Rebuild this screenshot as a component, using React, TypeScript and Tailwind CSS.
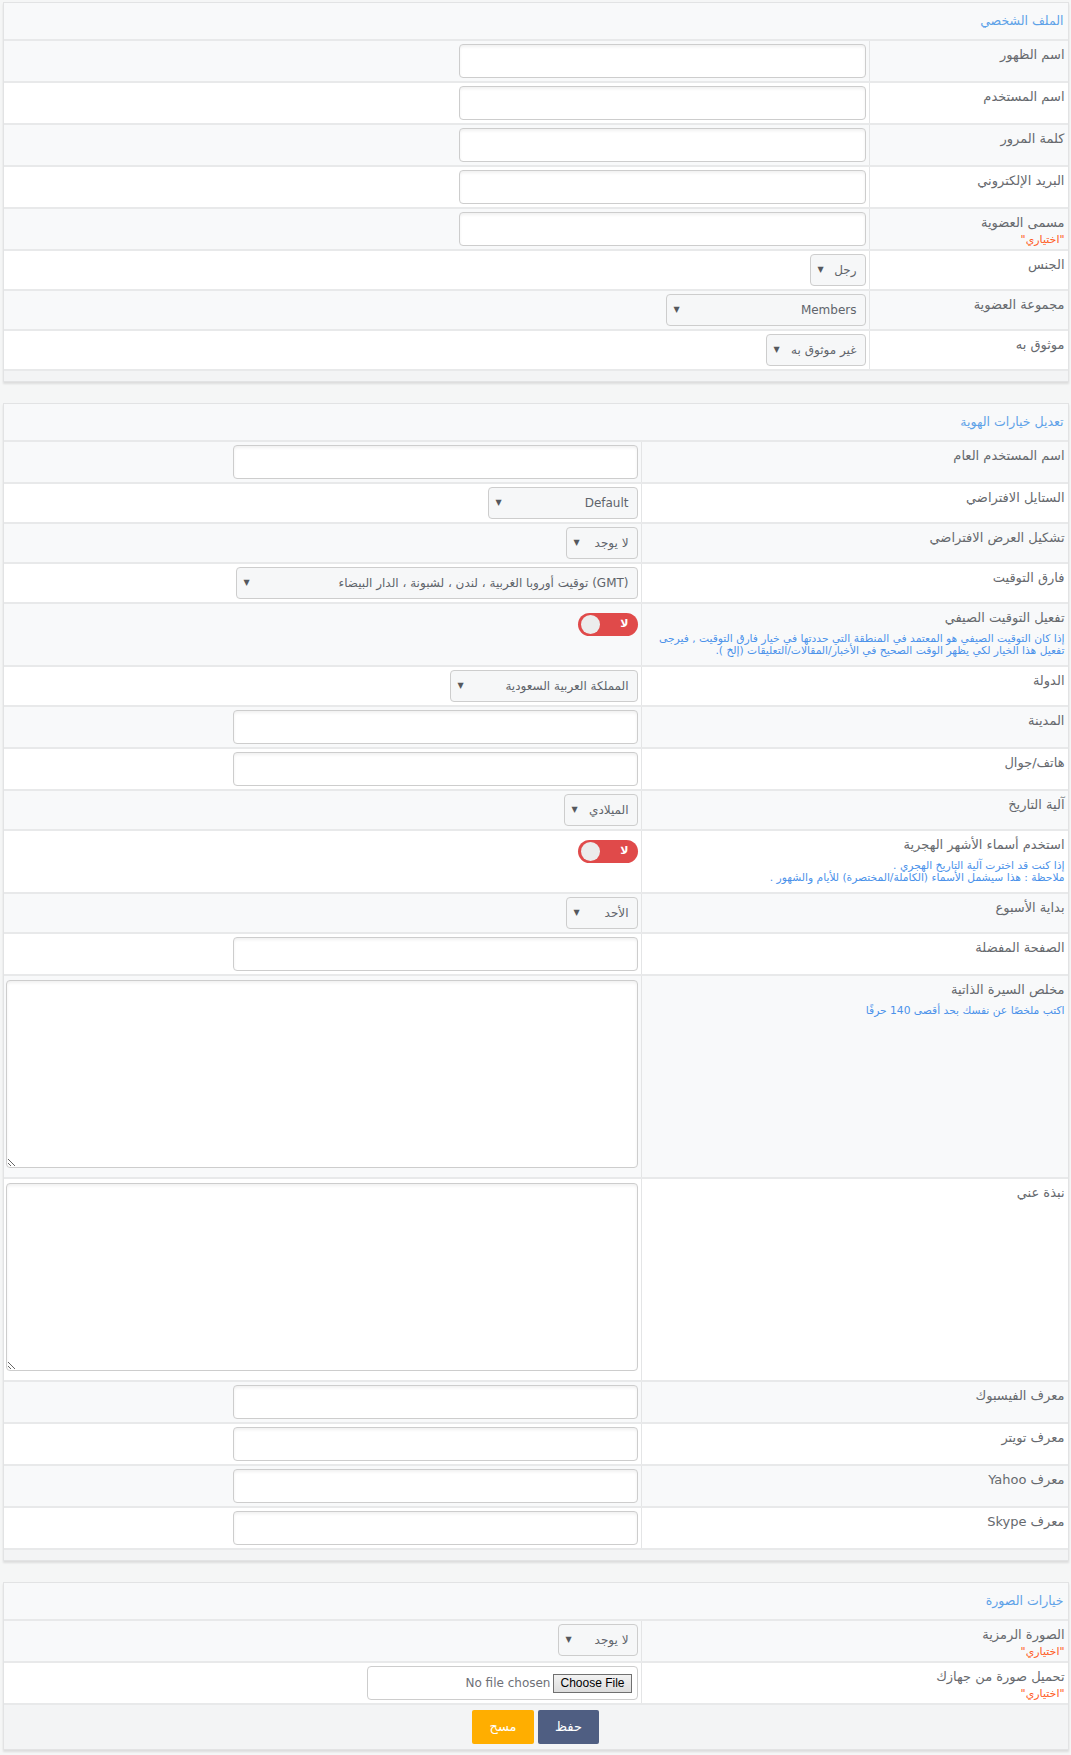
import React from "react";

const FONT = { fontFamily: 'Tahoma, "DejaVu Sans", sans-serif' };

function Panel({ title, children, footer }: { title: string; children: React.ReactNode; footer?: React.ReactNode }) {
  return (
    <div className="w-[1066px] mx-auto border border-[#e2e3e4] bg-white shadow-[0_2px_2px_rgba(0,0,0,0.10)]">
      <div className="h-[38px] bg-[#f8f9fa] border-b-2 border-[#e8e9ea] flex items-center pr-[4px] pl-[5px] text-[12.5px] text-[#5ea2e8]">
        {title}
      </div>
      {children}
      {footer ?? <div className="h-[10px] bg-[#f3f4f5]" />}
    </div>
  );
}

function Row({
  label,
  gray,
  lw,
  children,
  optional,
  desc,
}: {
  label: string;
  gray?: boolean;
  lw: string;
  children?: React.ReactNode;
  optional?: boolean;
  desc?: React.ReactNode;
}) {
  return (
    <div className={`flex border-b-2 border-[#e8e9ea] ${gray ? "bg-[#f8f9fa]" : "bg-white"}`}>
      <div className={`${lw} shrink-0 border-l border-[#e4e5e6] pr-[3px] pl-[5px] pt-[6px]`}>
        <div className="text-[13px] leading-[16px] text-[#66696e]">{label}</div>
        {optional && <div className="text-[11px] leading-[18px] text-[#ff5b1e]">"اختياري"</div>}
        {desc && (
          <div className="mt-[7px] mb-[9px] text-[10.7px] leading-[11.5px] text-[#4b92ea] whitespace-nowrap">{desc}</div>
        )}
      </div>
      <div className="flex-1 px-[3px] py-[3px] flex items-start">{children}</div>
    </div>
  );
}

function Input({ w = "w-[407px]" }: { w?: string }) {
  return (
    <input
      type="text"
      className={`${w} h-[34px] bg-white border border-[#cdcdcd] rounded-[4px] shadow-[inset_0_2px_3px_rgba(0,0,0,0.06)] outline-none`}
    />
  );
}

function Select({ value, w }: { value: string; w: string }) {
  return (
    <div
      className={`${w} h-[32px] bg-[#f6f7f8] border border-[#cdcdcd] rounded-[4px] flex items-center justify-between pr-[8px] pl-[7px] text-[12px] text-[#60646b]`}
    >
      <span className="whitespace-nowrap">{value}</span>
      <span className="text-[8px] text-[#55585d]">▼</span>
    </div>
  );
}

function Toggle() {
  return (
    <div className="mt-[6px] w-[60px] h-[23px] rounded-full bg-[#e04a4a] relative flex items-center">
      <span className="absolute right-[9px] top-[3px] text-[11px] font-bold text-white leading-[16px]">لا</span>
      <span className="absolute left-[3px] top-[2px] w-[19px] h-[19px] rounded-full bg-[#ececec]" />
    </div>
  );
}

function TextArea() {
  return (
    <textarea className="w-[632px] h-[188px] bg-white border border-[#cdcdcd] rounded-[4px] shadow-[inset_0_2px_3px_rgba(0,0,0,0.06)] outline-none mt-[1px] mb-[6px]" />
  );
}

export default function App() {
  const L1 = "w-[199px]";
  const L2 = "w-[427px]";
  return (
    <div dir="rtl" style={FONT} className="min-h-[1755px] bg-[#f5f6f6] pt-[2px]">
      <Panel title="الملف الشخصي">
        <Row lw={L1} gray label="اسم الظهور"><Input /></Row>
        <Row lw={L1} label="اسم المستخدم"><Input /></Row>
        <Row lw={L1} gray label="كلمة المرور"><Input /></Row>
        <Row lw={L1} label="البريد الإلكتروني"><Input /></Row>
        <Row lw={L1} gray label="مسمى العضوية" optional><Input /></Row>
        <Row lw={L1} label="الجنس"><Select value="رجل" w="w-[56px]" /></Row>
        <Row lw={L1} gray label="مجموعة العضوية"><Select value="Members" w="w-[200px]" /></Row>
        <Row lw={L1} label="موثوق به"><Select value="غير موثوق به" w="w-[100px]" /></Row>
      </Panel>

      <div className="h-[21px]" />

      <Panel title="تعديل خيارات الهوية">
        <Row lw={L2} gray label="اسم المستخدم العام"><Input w="w-[405px]" /></Row>
        <Row lw={L2} label="الستايل الافتراضي"><Select value="Default" w="w-[150px]" /></Row>
        <Row lw={L2} gray label="تشكيل العرض الافتراضي"><Select value="لا يوجد" w="w-[72px]" /></Row>
        <Row lw={L2} label="فارق التوقيت"><Select value="(GMT) توقيت أوروبا الغربية ، لندن ، لشبونة ، الدار البيضاء" w="w-[402px]" /></Row>
        <Row
          lw={L2}
          gray
          label="تفعيل التوقيت الصيفي"
          desc={
            <>
              إذا كان التوقيت الصيفي هو المعتمد في المنطقة التي حددتها في خيار فارق التوقيت , فيرجى
              <br />
              تفعيل هذا الخيار لكي يظهر الوقت الصحيح في الأخبار/المقالات/التعليقات (إلخ ).
            </>
          }
        >
          <Toggle />
        </Row>
        <Row lw={L2} label="الدولة"><Select value="المملكة العربية السعودية" w="w-[188px]" /></Row>
        <Row lw={L2} gray label="المدينة"><Input w="w-[405px]" /></Row>
        <Row lw={L2} label="هاتف/جوال"><Input w="w-[405px]" /></Row>
        <Row lw={L2} gray label="آلية التاريخ"><Select value="الميلادي" w="w-[74px]" /></Row>
        <Row
          lw={L2}
          label="استخدم أسماء الأشهر الهجرية"
          desc={
            <>
              إذا كنت قد اخترت آلية التاريخ الهجري .
              <br />
              ملاحظة : هذا سيشمل الأسماء (الكاملة/المختصرة) للأيام والشهور .
            </>
          }
        >
          <Toggle />
        </Row>
        <Row lw={L2} gray label="بداية الأسبوع"><Select value="الأحد" w="w-[72px]" /></Row>
        <Row lw={L2} label="الصفحة المفضلة"><Input w="w-[405px]" /></Row>
        <Row lw={L2} gray label="مخلص السيرة الذاتية" desc="اكتب ملخصًا عن نفسك بحد أقصى 140 حرفًا"><TextArea /></Row>
        <Row lw={L2} label="نبذة عني"><TextArea /></Row>
        <Row lw={L2} gray label="معرف الفيسبوك"><Input w="w-[405px]" /></Row>
        <Row lw={L2} label="معرف تويتر"><Input w="w-[405px]" /></Row>
        <Row lw={L2} gray label="معرف Yahoo"><Input w="w-[405px]" /></Row>
        <Row lw={L2} label="معرف Skype"><Input w="w-[405px]" /></Row>
      </Panel>

      <div className="h-[21px]" />

      <Panel
        title="خيارات الصورة"
        footer={
          <div className="h-[44px] bg-[#f3f4f5] flex items-center justify-center gap-[4px]">
            <button className="w-[61px] h-[34px] rounded-[2px] bg-[#4f5e82] text-white text-[13px]">حفظ</button>
            <button className="w-[62px] h-[34px] rounded-[2px] bg-[#ffae00] text-white text-[13px]">مسح</button>
          </div>
        }
      >
        <Row lw={L2} gray label="الصورة الرمزية" optional><Select value="لا يوجد" w="w-[80px]" /></Row>
        <Row lw={L2} label="تحميل صورة من جهازك" optional>
          <div className="w-[271px] h-[34px] bg-white border border-[#cdcdcd] rounded-[4px] flex items-center pr-[5px] gap-[3px]">
            <span
              className="h-[19px] px-[6px] border border-[#707070] bg-gradient-to-b from-[#f2f2f2] to-[#dddddd] text-[12px] leading-[17px] text-black whitespace-nowrap"
              style={{ fontFamily: '"Liberation Sans", Arial, sans-serif' }}
            >
              Choose File
            </span>
            <span className="text-[12px] text-[#6e7077] whitespace-nowrap" style={{ fontFamily: '"DejaVu Sans", sans-serif' }}>
              No file chosen
            </span>
          </div>
        </Row>
      </Panel>
    </div>
  );
}
